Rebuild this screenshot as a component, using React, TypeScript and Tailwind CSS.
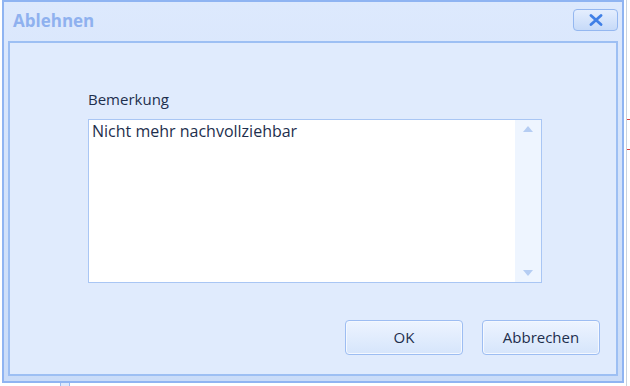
import React from "react";

const font = { fontFamily: '"Open Sans", "Noto Sans", sans-serif' };

function DialogButton({ label }: { label: string }) {
  return (
    <button className="flex h-[35px] w-[118px] items-center justify-center rounded-[4px] border border-[#9dbdf2] bg-gradient-to-b from-[#edf4ff] to-[#d6e5fb] text-[15px] text-[#1e2f4d] shadow-[inset_0_0_0_1px_#f4f8ff]">
      {label}
    </button>
  );
}

export default function App() {
  return (
    <div className="relative h-[386px] w-[630px] overflow-hidden bg-white" style={font}>
      {/* what shows of the app behind */}
      <div className="absolute left-[626px] top-0 h-[386px] w-px bg-[#c9d3df]" />
      <div className="absolute left-[627px] top-[119px] h-px w-[3px] bg-[#e04040]" />
      <div className="absolute left-[627px] top-[149px] h-px w-[3px] bg-[#e04040]" />
      <div className="absolute left-[60px] top-[382px] h-[4px] w-[10px] border-x border-[#9dbdf2] bg-[#dfeafc]" />

      {/* dialog window */}
      <div className="absolute left-[2px] top-0 flex h-[383px] w-[622px] flex-col border-2 border-[#8fb4f2] bg-gradient-to-b from-[#dde9fd] to-[#cadcf8]">
        <div className="flex h-[39px] items-center justify-between pl-[9px] pr-[4px]">
          <span className="pb-[2px] text-[17px] font-bold text-[#8fb1ef]">Ablehnen</span>
          <div className="mb-[4px] flex h-[22px] w-[45px] items-center justify-center rounded-[4px] border border-[#94b7f0] bg-gradient-to-b from-[#e4eefe] to-[#c6daf8]">
            <svg width="14" height="12" viewBox="0 0 14 12">
              <path d="M2 1.5 L12 10.5 M12 1.5 L2 10.5" stroke="#3f7fe6" strokeWidth="2.8" strokeLinecap="round" />
            </svg>
          </div>
        </div>
        <div className="mx-[4px] mb-[5px] flex flex-1 flex-col border-2 border-[#9dbff3] bg-[#e0ebfd] pl-[78px] pr-[16px] pt-[46px]">
          <div className="w-[454px]">
            <div className="mb-[10px] text-[15px] leading-[20px] text-[#1e2f4d]">Bemerkung</div>
            <div className="flex h-[164px] border border-[#a9c6f4] bg-white">
              <div className="flex-1 pl-[3px] pt-[1px] text-[16px] leading-[20px] text-[#1e2f4d]">
                Nicht mehr nachvollziehbar
              </div>
              <div className="flex w-[26px] flex-col items-center justify-between bg-[#eef5ff] py-[6px]">
                <svg width="10" height="6" viewBox="0 0 10 6">
                  <path d="M0 6 L5 0 L10 6 Z" fill="#b5cdf3" />
                </svg>
                <svg width="10" height="6" viewBox="0 0 10 6">
                  <path d="M0 0 L10 0 L5 6 Z" fill="#b5cdf3" />
                </svg>
              </div>
            </div>
          </div>
          <div className="mt-[37px] flex justify-end gap-[19px]">
            <DialogButton label="OK" />
            <DialogButton label="Abbrechen" />
          </div>
        </div>
      </div>
    </div>
  );
}
